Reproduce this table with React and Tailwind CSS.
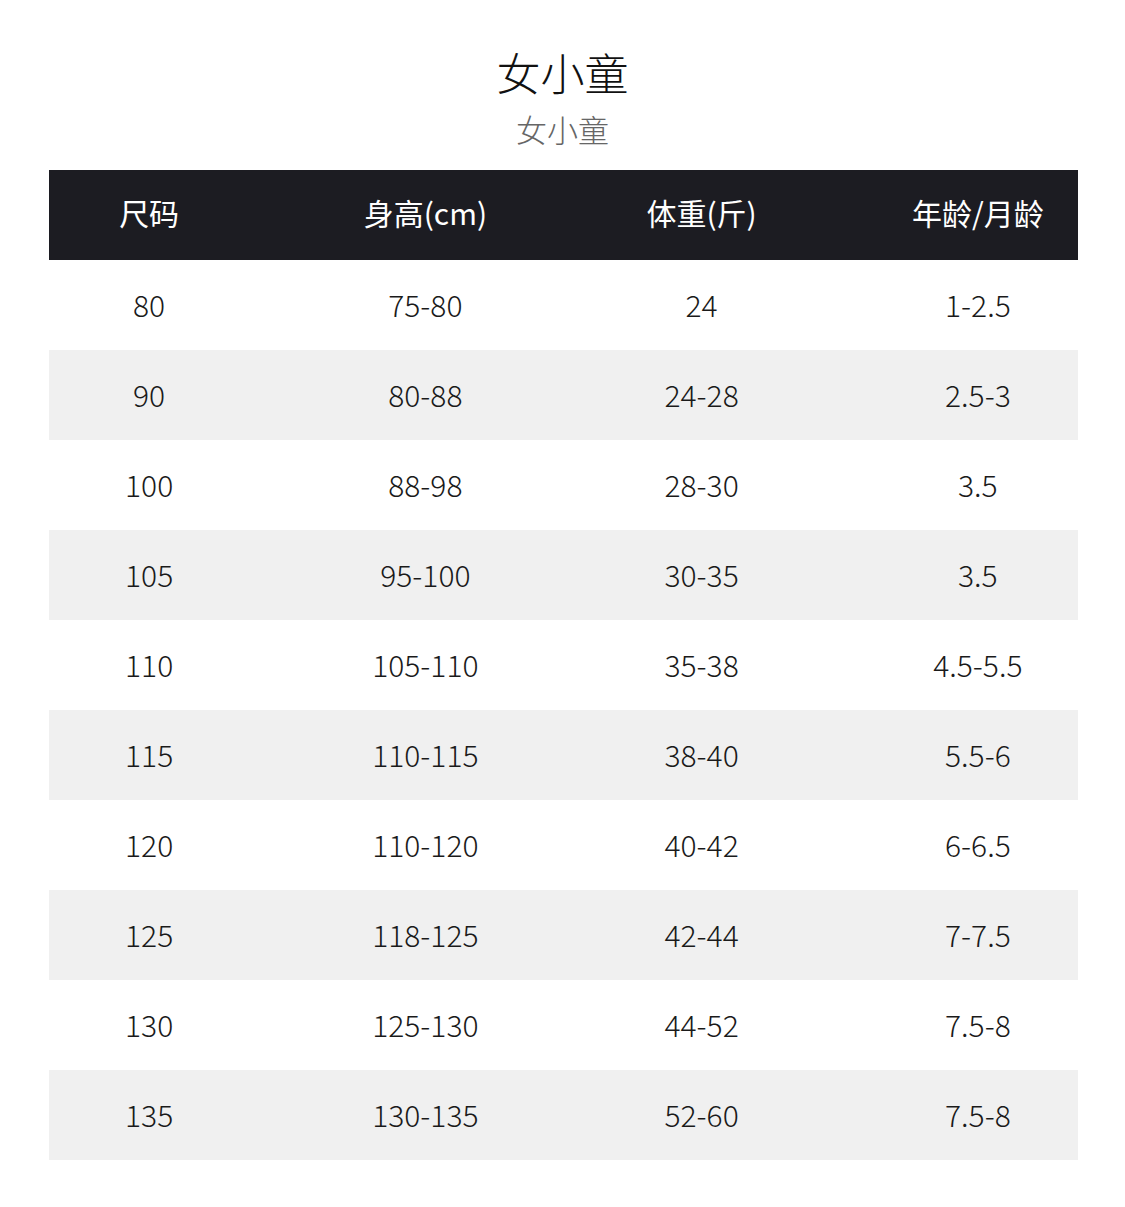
import React from "react"

const rows = [
  ["80", "75-80", "24", "1-2.5"],
  ["90", "80-88", "24-28", "2.5-3"],
  ["100", "88-98", "28-30", "3.5"],
  ["105", "95-100", "30-35", "3.5"],
  ["110", "105-110", "35-38", "4.5-5.5"],
  ["115", "110-115", "38-40", "5.5-6"],
  ["120", "110-120", "40-42", "6-6.5"],
  ["125", "118-125", "42-44", "7-7.5"],
  ["130", "125-130", "44-52", "7.5-8"],
  ["135", "130-135", "52-60", "7.5-8"],
]

const headers = ["尺码", "身高(cm)", "体重(斤)", "年龄/月龄"]

const font = { fontFamily: '"Noto Sans CJK SC", "Noto Sans", sans-serif' }

const App = () => {
  return (
    <div className="min-h-screen bg-white pt-[44px] pb-[47px]" style={font}>
      <div className="text-center">
        <h1 className="text-[44px] leading-[56px] font-light text-[#111]">女小童</h1>
        <p className="mt-[8px] text-[31px] leading-[42px] text-[#666] font-light">女小童</p>
      </div>

      <div className="ml-[49px] mr-[47px] mt-[20px]">
        <div className="grid grid-cols-4 gap-x-[76px] h-[90px] pb-[6px] items-center bg-[#1c1c22] text-white text-[30px] font-normal">
          {headers.map((h) => (
            <div key={h} className="text-center">{h}</div>
          ))}
        </div>
        {rows.map((r, i) => (
          <div
            key={i}
            className={`grid grid-cols-4 gap-x-[76px] h-[90px] pb-[2px] items-center text-[30px] text-[#1a1a1a] font-light ${
              i % 2 === 1 ? "bg-[#f0f0f0]" : "bg-white"
            }`}
          >
            {r.map((c, j) => (
              <div key={j} className="text-center">{c}</div>
            ))}
          </div>
        ))}
      </div>
    </div>
  )
}

export default App
